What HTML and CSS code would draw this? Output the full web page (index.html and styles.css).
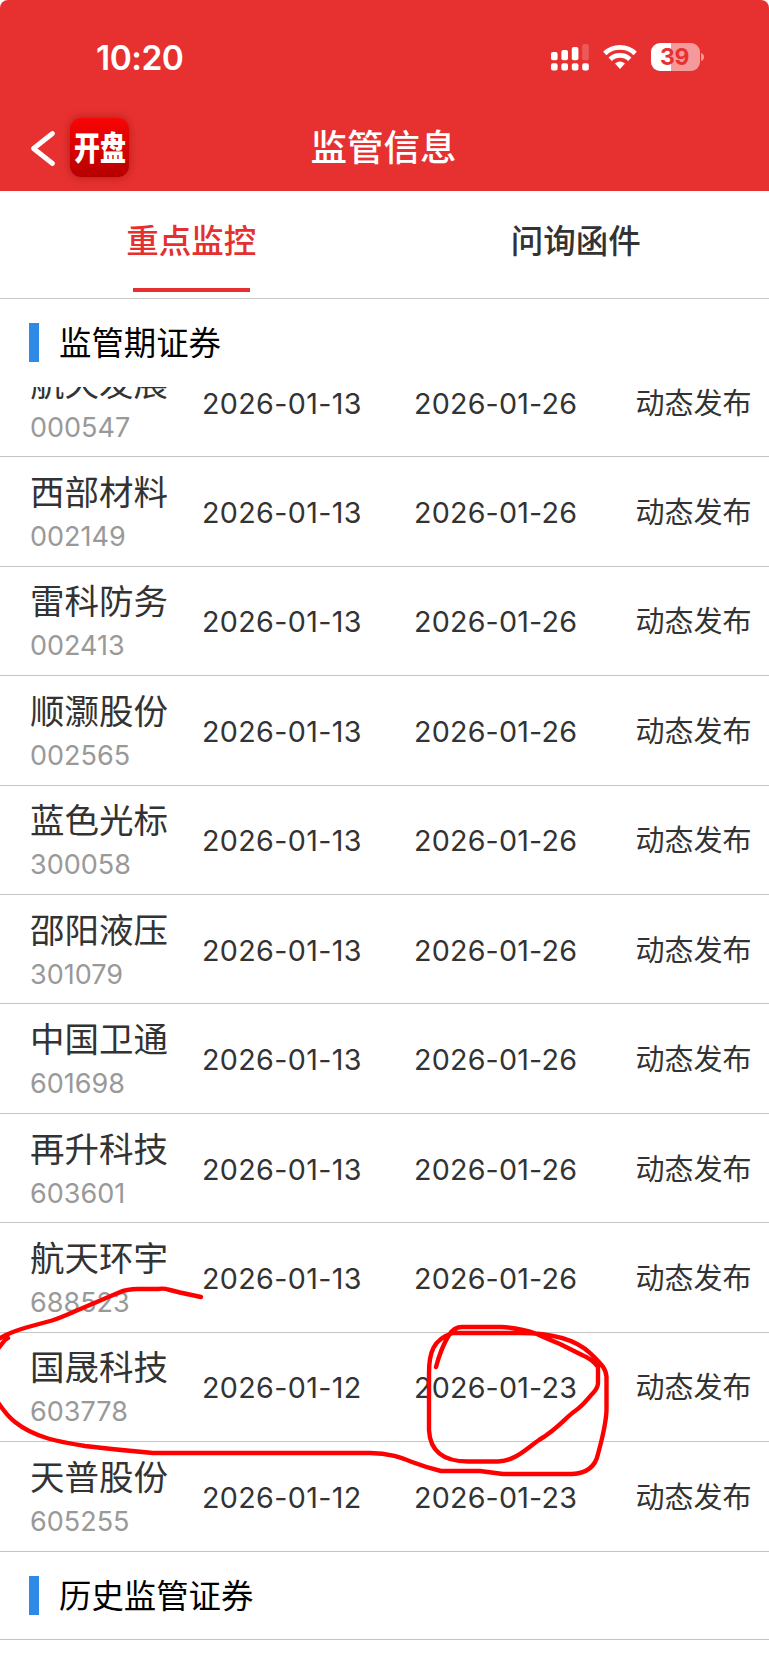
FILE: index.html
```html
<!DOCTYPE html>
<html lang="zh-CN">
<head>
<meta charset="utf-8">
<title>监管信息</title>
<link rel="stylesheet" href="styles.css">
</head>
<body>
<div class="screen">
  <header class="header">
    <div class="status">
      <div class="time">10:20</div>
      <div class="status-icons">
        <svg class="signal" width="38" height="28" viewBox="0 0 38 28" fill="#fff">
          <rect x="0" y="9" width="6.6" height="8.2" rx="2"/>
          <rect x="10.4" y="7" width="6.6" height="10.2" rx="2"/>
          <rect x="20.8" y="4" width="6.6" height="13.2" rx="2"/>
          <rect x="31.2" y="1" width="6.6" height="16.2" rx="2" opacity=".2"/>
          <rect x="0" y="20.3" width="6.6" height="7.2" rx="2"/>
          <rect x="10.4" y="20.3" width="6.6" height="7.2" rx="2"/>
          <rect x="20.8" y="20.3" width="6.6" height="7.2" rx="2"/>
          <rect x="31.2" y="20.3" width="6.6" height="7.2" rx="2"/>
        </svg>
        <svg class="wifi" width="34" height="26" viewBox="0 0 34 26" fill="none" stroke="#fff" stroke-width="4.8">
          <path d="M1.8 9.4C10.2 1.4 23.8 1.4 32.2 9.4"/>
          <path d="M7.2 15.2C12.7 10.1 21.3 10.1 26.8 15.2"/>
          <path d="M12 19.6Q17 15.6 22 19.6L17 24.9Z" fill="#fff" stroke="none"/>
        </svg>
        <div class="battery"><span class="battery-level">39</span><svg class="battery-cap" width="3" height="8" viewBox="0 0 3 8"><path d="M0 0Q3 1 3 4T0 8Z" fill="#f49a9a"/></svg></div>
      </div>
    </div>
    <div class="nav">
      <div class="nav-left">
        <svg class="back" width="26" height="37" viewBox="0 0 26 37" fill="none" stroke="#fff" stroke-width="4.8" stroke-linecap="round" stroke-linejoin="round"><path d="M22.5 3.5L3.5 18.5L22.5 33.5"/></svg>
        <div class="logo"><span class="logo-text">开盘</span></div>
      </div>
      <h1 class="title">监管信息</h1>
      <div></div>
    </div>
  </header>
  <nav class="tabs">
    <div class="tab active">重点监控</div>
    <div class="tab">问询函件</div>
  </nav>
  <h2 class="section">监管期证券</h2>
  <main class="list">
    <div class="row"><div><div class="name">航天发展</div><div class="code">000547</div></div><div class="date start">2026-01-13</div><div class="date">2026-01-26</div><div class="note">动态发布</div></div>
    <div class="row"><div><div class="name">西部材料</div><div class="code">002149</div></div><div class="date start">2026-01-13</div><div class="date">2026-01-26</div><div class="note">动态发布</div></div>
    <div class="row"><div><div class="name">雷科防务</div><div class="code">002413</div></div><div class="date start">2026-01-13</div><div class="date">2026-01-26</div><div class="note">动态发布</div></div>
    <div class="row"><div><div class="name">顺灏股份</div><div class="code">002565</div></div><div class="date start">2026-01-13</div><div class="date">2026-01-26</div><div class="note">动态发布</div></div>
    <div class="row"><div><div class="name">蓝色光标</div><div class="code">300058</div></div><div class="date start">2026-01-13</div><div class="date">2026-01-26</div><div class="note">动态发布</div></div>
    <div class="row"><div><div class="name">邵阳液压</div><div class="code">301079</div></div><div class="date start">2026-01-13</div><div class="date">2026-01-26</div><div class="note">动态发布</div></div>
    <div class="row"><div><div class="name">中国卫通</div><div class="code">601698</div></div><div class="date start">2026-01-13</div><div class="date">2026-01-26</div><div class="note">动态发布</div></div>
    <div class="row"><div><div class="name">再升科技</div><div class="code">603601</div></div><div class="date start">2026-01-13</div><div class="date">2026-01-26</div><div class="note">动态发布</div></div>
    <div class="row"><div><div class="name">航天环宇</div><div class="code">688523</div></div><div class="date start">2026-01-13</div><div class="date">2026-01-26</div><div class="note">动态发布</div></div>
    <div class="row"><div><div class="name">国晟科技</div><div class="code">603778</div></div><div class="date start">2026-01-12</div><div class="date">2026-01-23</div><div class="note">动态发布</div></div>
    <div class="row"><div><div class="name">天普股份</div><div class="code">605255</div></div><div class="date start">2026-01-12</div><div class="date">2026-01-23</div><div class="note">动态发布</div></div>
  </main>
  <h2 class="section history">历史监管证券</h2>
  <svg class="ink" width="769" height="200" viewBox="0 1280 769 200" fill="none" stroke="#f00" stroke-width="4.4" stroke-linecap="round" stroke-linejoin="round">
    <path d="M201 1297L180 1292.5L168 1289.5Q164 1288 158 1289H138Q127 1289 119 1292.5L78 1310Q60 1318 52 1320.500L28 1327Q14 1331 6 1335L-3 1340"/>
    <path d="M8 1338L5 1340L-3 1350"/>
    <path d="M-3 1401Q7 1416 15 1422C35 1438 60 1442 85 1446Q118 1450 153 1453H370C390 1453 402 1458 412 1462Q425 1467 441 1471H480L503 1474H572Q594 1473 598 1454Q606 1425 606.500 1410V1377C606 1368 601 1364 590 1353C573 1337 545 1333 520 1333H453C433 1339 429 1353 429 1373V1430C430 1451 443 1461.500 468 1461.500H498C515 1461 526 1449 539 1440C559 1428 567 1416 575 1411C584 1405 588 1398 594 1392Q598 1387 598 1383V1367Q592 1359 582 1355L560 1344Q543 1337 537 1334Q520 1328 501 1327H462Q454 1327 449 1335Q441 1348 436 1367"/>
  </svg>
</div>
</body>
</html>
```
FILE: styles.css
```css
* { box-sizing: border-box; }
body {
  margin: 0;
  background: #fff;
  font-family: Inter, "Noto Sans CJK SC", sans-serif;
  color: #333;
}
.screen { position: relative; width: 769px; height: 1665px; overflow: hidden; }

.header { height: 191px; background: #e73130; border-radius: 8px 8px 0 0; color: #fff; }
.status { display: flex; justify-content: space-between; height: 105px; padding: 36px 65px 0 96px; }
.time { font-size: 33.500px; line-height: 44px; font-weight: 600; letter-spacing: -.5px; }
.status-icons { display: flex; align-items: flex-start; padding-top: 7px; }
.wifi { margin: 1px 0 0 14px; }
.battery { display: flex; align-items: center; margin-left: 14px; }
.battery-level {
  width: 49px; height: 28px; border-radius: 9px;
  background: linear-gradient(to right, #fff 19.500px, #f49a9a 19.500px);
  color: #e73130; font-size: 23px; line-height: 28px; font-weight: 700; text-align: center; letter-spacing: -.5px;
  padding-right: 2px;
}
.battery-cap { margin-left: 1px; }
.nav { display: grid; grid-template-columns: 1fr auto 1fr; height: 86px; }
.nav-left { display: flex; align-items: flex-start; padding: 13px 0 0 30px; }
.back { margin-top: 11.500px; }
.logo {
  display: flex; justify-content: center; align-items: center;
  width: 59px; height: 59px; margin-left: 14px; border-radius: 11px;
  background: linear-gradient(#f90505, #b60000);
  box-shadow: 0 0 10px rgba(110, 0, 0, .45);
}
.logo-text { font-size: 31px; line-height: 40px; font-weight: 900; transform: scale(.84, 1.05); white-space: nowrap; }
.title { margin: 0 2px 0 0; font-size: 36.500px; line-height: 86px; font-weight: 500; }

.tabs { display: grid; grid-template-columns: 1fr 1fr; height: 108px; border-bottom: 1px solid #c8c8c8; }
.tab { display: flex; flex-direction: column; align-items: center; padding: 26px 2px 0 0; font-size: 32.500px; line-height: 50px; font-weight: 500; }
.tab.active { color: #e5302f; }
.tab.active::after { content: ""; width: 117px; height: 4px; margin: 21px -1px 0 0; background: #e5302f; }

.section { display: flex; align-items: flex-start; gap: 20px; height: 87.500px; margin: 0; padding: 23px 0 0 29px; font-size: 32.400px; line-height: 44px; font-weight: 400; color: #000; }
.section::before { content: ""; width: 10px; height: 39px; margin-top: 1px; background: #2d8ae7; }
.history { height: 88px; border-bottom: 1px solid #c4c4c4; }

.list { display: flex; flex-direction: column; justify-content: flex-end; height: 1165px; overflow: hidden; }
.row {
  display: grid; grid-template-columns: 173px 212px 221px 1fr; align-items: center;
  flex: none; height: 109.430px; padding: 3px 0 0 30px; border-bottom: 1px solid #c4c4c4;
}
.name { padding-top: 2px; font-size: 34.500px; line-height: 45px; }
.code { font-size: 27px; line-height: 43px; color: #999; }
.date { margin-left: -1px; font-size: 28.700px; line-height: 40px; letter-spacing: .18px; }
.date.start { letter-spacing: .34px; }
.note { margin-left: -.5px; font-size: 29px; line-height: 40px; }

/* Hand-drawn marks over the list */
.ink { position: absolute; left: 0; top: 1280px; }
```
